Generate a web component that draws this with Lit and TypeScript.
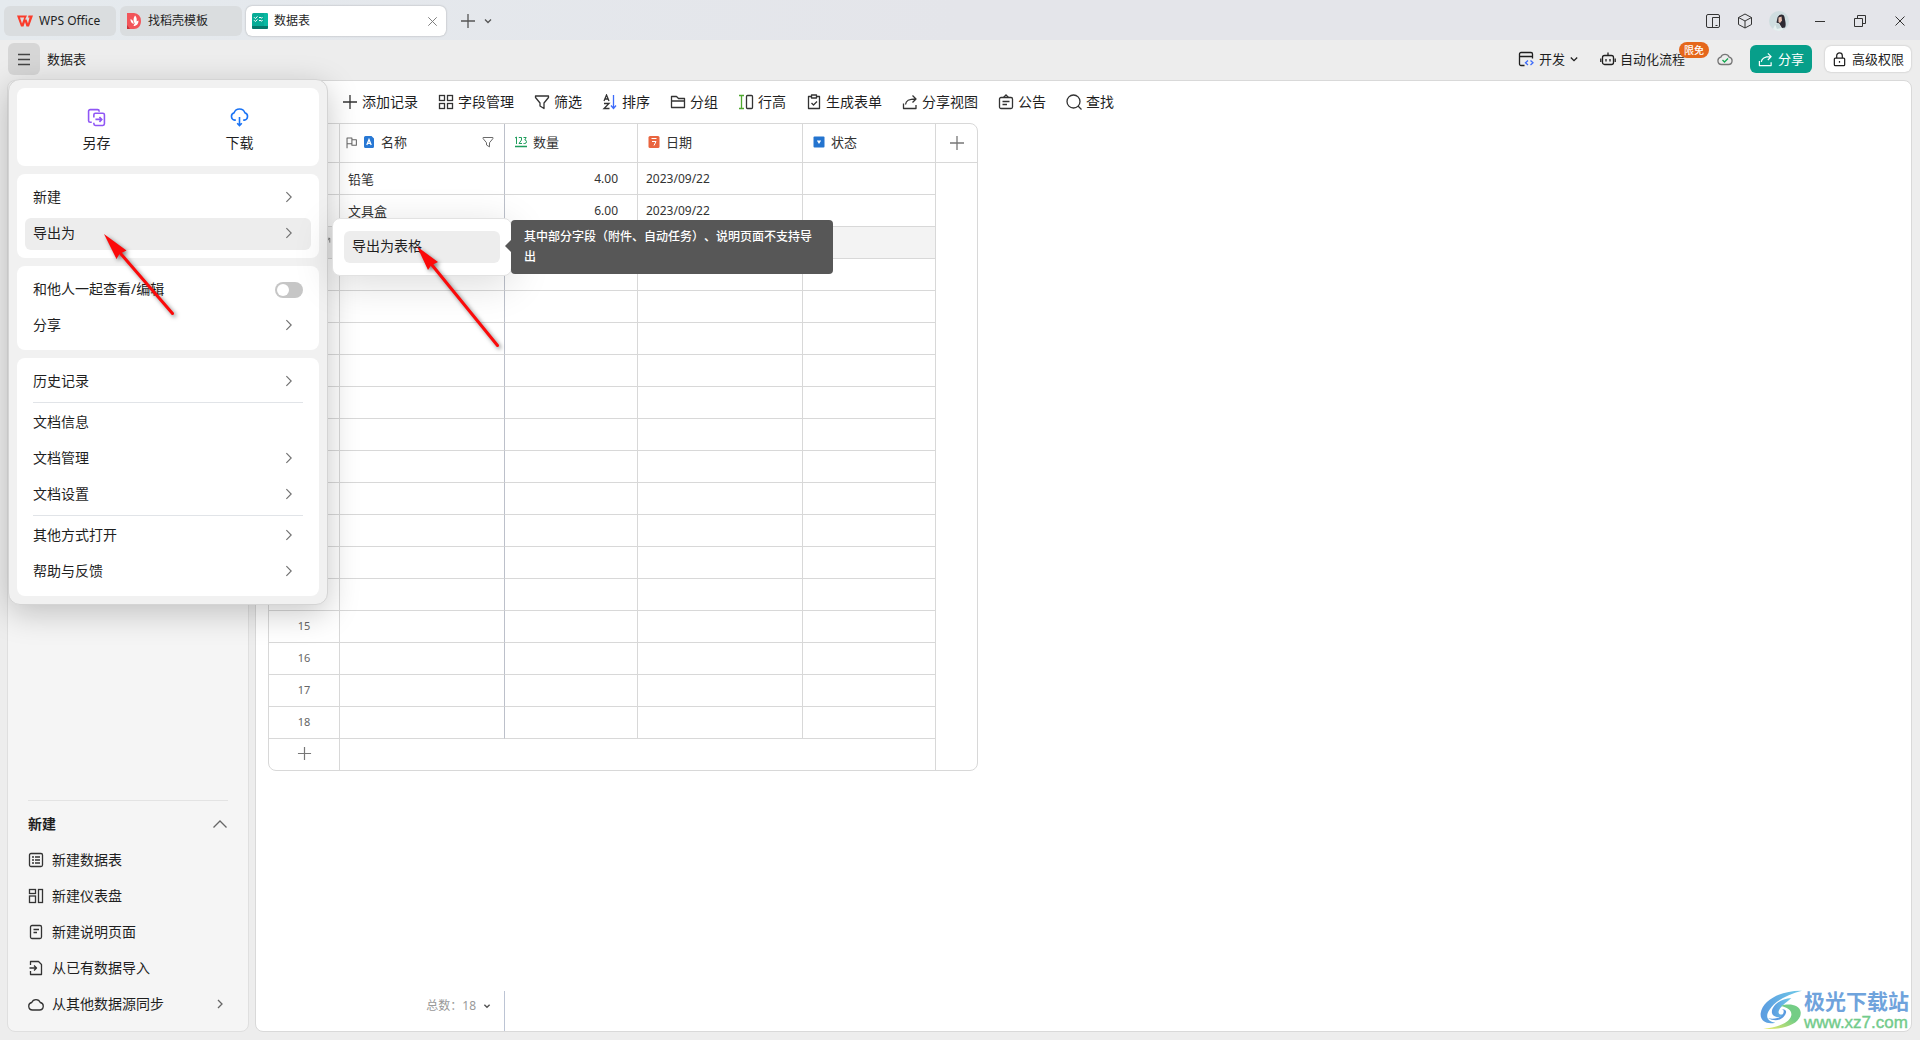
import { LitElement, html, svg, css, nothing } from "lit";
import type { TemplateResult } from "lit";
import { customElement, state } from "lit/decorators.js";
import { classMap } from "lit/directives/class-map.js";

const glyphs: Record<string, TemplateResult> = {
  plus: svg`<path d="M8 1v14M1 8h14"/>`,
  down: svg`<path d="M5 6.500l3 3 3-3" />`,
  caret: svg`<path d="M.8 2.500L4 5.700 7.200 2.500"/>`,
  right: svg`<path d="M5 2.500L10.500 8 5 13.500"/>`,
  rightSmall: svg`<path d="M6 4l4 4-4 4"/>`,
  up: svg`<path d="M1.500 11.500L8 5l6.500 6.500"/>`,
  close: svg`<path d="M3.500 3.500l9 9M12.500 3.500l-9 9"/>`,
  minimize: svg`<path d="M3 8.500h10"/>`,
  restore: svg`<path d="M2.500 5.500h8v8h-8zM5.500 5.500v-3h8v8h-3"/>`,
  panel: svg`<rect x="1.500" y="1.500" width="13" height="13" rx="1.500"/><path d="M7.500 14.500v-10h7M10.500 12.500h2"/>`,
  cube: svg`<path d="M8 1l6.500 3.500v7L8 15l-6.500-3.500v-7zM1.500 4.500L8 8l6.500-3.500M8 8v7"/>`,
  menu: svg`<path d="M1 2.500h12M1 7.500h12M1 12.500h12"/>`,
  fields: svg`<rect x="1.500" y="1.500" width="5" height="5"/><rect x="9.500" y="1.500" width="5" height="5"/><rect x="1.500" y="9.500" width="5" height="5"/><rect x="9.500" y="9.500" width="5" height="5"/>`,
  filter: svg`<path d="M1.500 2h13v1.500L10 9v5.500L6 12V9L1.500 3.500z" stroke-linejoin="round"/>`,
  sort: svg`<path d="M2 7l2.500-6L7 7M3 5h3M2 9.500h5L2 14.500h5.500" /><path d="M11.500 1v13M9 11.500l2.500 3 2.500-3" stroke="#3d6bfa"/>`,
  group: svg`<path d="M1.500 13.500v-11h5l2 2h6v9zM1.500 7h13" stroke-linejoin="round"/>`,
  rowHeight: svg`<path d="M1 1.500h5M3.500 1.500v13M1 14.500h5" stroke="#4ea72e"/><rect x="8.500" y="1.500" width="6" height="13" rx="1"/>`,
  form: svg`<path d="M5 2.500H2.500v12h11v-12H11M5.500 1h5v3h-5zM5.500 9l2 2 3.500-3.500" stroke-linejoin="round"/>`,
  share: svg`<path d="M1.500 9.500v5h12.500v-3.500M3.500 10.500c.5-4 3-5.500 10-5.500M10.500 1.500L14 5l-3.500 3.500" stroke-linejoin="round"/>`,
  notice: svg`<rect x="1.500" y="3.500" width="13" height="11" rx="1.500"/><path d="M5.500 3.500L8 1l2.500 2.500M4.500 7.500h7M4.500 10.500h4.500"/>`,
  search: svg`<circle cx="7.500" cy="7.500" r="6.500"/><path d="M12 12l3.500 3.500"/>`,
  develop: svg`<path d="M6.500 14.500H3a1.500 1.500 0 0 1-1.500-1.500V3A1.500 1.500 0 0 1 3 1.500h10A1.500 1.500 0 0 1 14.500 3v4.500M1.500 5.500h13"/><path d="M10 9.500l-2.500 2.300 2.500 2.300M12.500 9.500l2.500 2.300-2.500 2.300" stroke="#3d6bfa"/>`,
  robot: svg`<rect x="2.500" y="4.500" width="11" height="9" rx="2"/><path d="M8 4.500V1.500M6 8v2.500M10 8v2.500M.8 7.500v3.500M15.200 7.500v3.500"/>`,
  cloudOk: svg`<path d="M4.500 13.500a3.700 3.700 0 0 1-.7-7.300 4.500 4.500 0 0 1 8.400 0 3.700 3.700 0 0 1-.7 7.300z"/><path d="M5.500 9l2 2 3.500-3.500" stroke="#12a84e"/>`,
  lock: svg`<rect x="2.500" y="6.500" width="11" height="8" rx="1"/><path d="M5 6.500V4a3 3 0 0 1 6 0v2.500M8 9.500v2"/>`,
  sheet: svg`<rect x="1.500" y="1.500" width="13" height="13" rx="1.500"/><path d="M4 5h2M7 5h5M4 8h2M7 8h5M4 11h2M7 11h5"/>`,
  board: svg`<rect x="1.500" y="1.500" width="6" height="4"/><rect x="1.500" y="8" width="6" height="6.500"/><rect x="10.500" y="1.500" width="4" height="13"/>`,
  page: svg`<rect x="2.500" y="1.500" width="11" height="13" rx="1.500"/><path d="M5.500 5.500h5.500M5.500 8.500h3.500"/>`,
  importData: svg`<path d="M2.500 5V1.500h8l3 3v10h-11V11M1.500 8h7M6 5.500L8.500 8 6 10.500" stroke-linejoin="round"/>`,
  cloud: svg`<path d="M4.500 14a3.800 3.800 0 0 1-.8-7.500 4.600 4.600 0 0 1 8.600 0A3.800 3.800 0 0 1 11.500 14z"/>`,
  flag: svg`<path d="M2.500 15V2.500h6v7h-6M8.500 4.500h5.500v7H8.500v-2" stroke-linejoin="round"/>`,
  expand: svg`<path d="M7 2h7v7M14 2L4 13M4 8v5h5"/>`,
  saveAs: svg`<path d="M4.500 13.500H3A1.500 1.500 0 0 1 1.500 12V3A1.500 1.500 0 0 1 3 1.500h7A1.500 1.500 0 0 1 11.500 3v.5M6.500 9V6.500A1.500 1.500 0 0 1 8 5h7a1.500 1.500 0 0 1 1.500 1.500v8.500a1.500 1.500 0 0 1-1.500 1.500H8A1.500 1.500 0 0 1 6.500 15v-1M8 10.800h6M11.800 8.500l2.200 2.300-2.200 2.300"/>`,
  download: svg`<path d="M5.500 11.500H4.500a3.600 3.600 0 0 1-.6-7A5.400 5.400 0 0 1 14.100 4.500a3.600 3.600 0 0 1-.6 7h-1M9 8.500v8M6.800 14.500L9 16.700l2.200-2.200"/>`,
};

const icon = (name: string, size = 16, box = 16) => html`
  <svg class="icon" width=${size} height=${size} viewBox="0 0 ${box} ${box}" aria-hidden="true">${glyphs[name]}</svg>`;

const wpsLogo = html`
  <svg width="16" height="12" viewBox="0 0 32 24" aria-hidden="true">
    <path d="M0 1h20l-4 8h-3l1.500-4H6l4 12 3-8h6l3 8 3-12h-3l1-4h9l-8 22h-5l-3-9-3 9H8z" fill="#fa3c2c"/>
  </svg>`;

const docerLogo = html`
  <svg width="16" height="16" viewBox="0 0 16 16" aria-hidden="true">
    <path d="M1 0h7a7.500 7.500 0 0 1 7 8c0 5-3 8-7 8H1z" fill="#f2555a"/>
    <path d="M1 12l3 4H1z" fill="#c93238"/>
    <path d="M9 2.500c2 2 2.500 5 .5 8.500C7 9 7 5.500 9 2.500zM4.500 6c2 .5 3 2.500 3.300 5C5.500 10.500 4.300 8.500 4.500 6zM12.500 7.500c0 3-1.500 5.500-5 5.500 1-3 2.500-4.500 5-5.500z" fill="#fff"/>
  </svg>`;

const tableLogo = html`
  <svg width="16" height="16" viewBox="0 0 16 16" aria-hidden="true">
    <rect width="16" height="16" rx="1.500" fill="#06ab96"/>
    <path d="M12 0h2.500A1.500 1.500 0 0 1 16 1.500V13h-4z" fill="#08b8a1"/>
    <path d="M0 13h16v1.500a1.500 1.500 0 0 1-1.500 1.500h-13A1.500 1.500 0 0 1 0 14.500z" fill="#05786b"/>
    <path d="M2 4.200l1.300 1.300L5.500 3.500M7 4.800q1-1 2 0t1.500-.5M2 7.200l1.300 1.300L5.500 6.500M7 7.800q1-1 2 0t1.500-.5" stroke="#fff" fill="none"/>
  </svg>`;

const avatar = html`
  <svg width="20" height="20" viewBox="0 0 20 20" role="img" aria-label="用户头像">
    <circle cx="10" cy="10" r="10" fill="#cfdde0"/>
    <path d="M4 18l3-6 5 1 2 6a10 10 0 0 1-10-1z" fill="#e6f0f0"/>
    <path d="M8.500 6.500c1.500-3.500 6-4 7-.5.6 4 2 7 .5 10.500l-3 .5-2.500-4-3-1.500z" fill="#2e2a33"/>
    <path d="M9.500 6.500l3-1 .5 4-2 2.500-1.500-1z" fill="#e8bfae"/>
    <path d="M6 13l4-1 2 5-4 1z" fill="#c8d8da"/>
  </svg>`;

const textField = html`
  <svg width="12" height="12" viewBox="0 0 12 12" aria-hidden="true">
    <path d="M1 1.500A1.500 1.500 0 0 1 2.500 0h6L11 2.500v8A1.500 1.500 0 0 1 9.500 12h-7A1.500 1.500 0 0 1 1 10.500z" fill="#2878d4"/>
    <path d="M3.800 9L6 3.500 8.200 9M4.700 7.300h2.600" stroke="#fff" fill="none" stroke-width="1.300"/>
  </svg>`;
const numberField = html`
  <svg width="12" height="12" viewBox="0 0 12 12" aria-hidden="true">
    <path d="M0 2l1.500-1v7M3.800 1.500h2.700v2.500L4 7.500h3M8.500 1.500h2.700L9.800 4q1.700 0 1.700 1.700T9.800 7.500H8.500" stroke="#1f9d5c" fill="none"/>
    <path d="M0 10.500h12" stroke="#1f9d5c" stroke-width="1.500"/>
  </svg>`;
const dateField = html`
  <svg width="12" height="12" viewBox="0 0 12 12" aria-hidden="true">
    <rect x=".5" width="11" height="12" rx="1.500" fill="#e9653f"/>
    <path d="M3.500 2.500h5M4 5.500h4L6 9.500" stroke="#fff" fill="none"/>
  </svg>`;
const selectField = html`
  <svg width="12" height="12" viewBox="0 0 12 12" aria-hidden="true">
    <rect x=".5" y=".5" width="11" height="11" rx="1" fill="#2474cf"/>
    <path d="M3.800 4.500h4.400L6 8z" fill="#fff"/>
  </svg>`;

interface MenuEntry { label: string; kind?: "toggle" | "plain"; active?: boolean; ruleAfter?: boolean }

const menuCards: MenuEntry[][] = [
  [{ label: "新建" }, { label: "导出为", active: true }],
  [{ label: "和他人一起查看/编辑", kind: "toggle" }, { label: "分享" }],
  [
    { label: "历史记录", ruleAfter: true },
    { label: "文档信息", kind: "plain" },
    { label: "文档管理" },
    { label: "文档设置", ruleAfter: true },
    { label: "其他方式打开" },
    { label: "帮助与反馈" },
  ],
];

const tools: [string, string][] = [
  ["plus", "添加记录"], ["fields", "字段管理"], ["filter", "筛选"], ["sort", "排序"], ["group", "分组"],
  ["rowHeight", "行高"], ["form", "生成表单"], ["share", "分享视图"], ["notice", "公告"], ["search", "查找"],
];

const createItems: [string, string][] = [
  ["sheet", "新建数据表"], ["board", "新建仪表盘"], ["page", "新建说明页面"],
  ["importData", "从已有数据导入"], ["cloud", "从其他数据源同步"],
];

const records = [
  { name: "铅笔", count: "4.00", date: "2023/09/22" },
  { name: "文具盒", count: "6.00", date: "2023/09/22" },
];
const ROWS = 18;

const base = css`
  * { box-sizing: border-box; }
  button {
    display: flex; align-items: center; margin: 0; padding: 0; border: 0; background: none;
    color: inherit; font: inherit; text-align: left; white-space: nowrap; cursor: pointer;
  }
  svg { display: block; flex: none; }
  .icon { fill: none; stroke: currentColor; stroke-width: 1.300; }
`;

@customElement("file-menu")
export class FileMenu extends LitElement {
  @state() private shared = false;

  static styles = [base, css`
    :host { display: block; font-size: 14px; line-height: 20px; color: #1f1f1f; }
    .menu {
      display: flex; flex-direction: column; gap: 8px; width: 320px; padding: 8px;
      background: #f1f1f1; border: 1px solid #d4d4d4; border-radius: 12px;
      box-shadow: 0 8px 32px rgba(0, 0, 0, 0.22);
    }
    .card { display: flex; flex-direction: column; gap: 4px; padding: 8px; background: #fff; border-radius: 8px; }
    .quick { display: grid; grid-template-columns: 1fr 1fr; gap: 0; }
    .quick button { flex-direction: column; justify-content: center; gap: 6px; height: 62px; padding-top: 6px; }
    .save .icon { color: #8f56f5; }
    .load .icon { color: #1a73f5; }
    .quick .icon { stroke-width: 1.500; }
    .entry {
      display: flex; align-items: center; justify-content: space-between;
      width: 100%; height: 32px; padding: 0 8px 2px; border-radius: 6px;
    }
    .active { background: #ededed; }
    .slot { display: grid; place-items: center; width: 28px; color: #707070; }
    .rule { height: 1px; margin: 0 8px; background: #e1e4e8; }
    .toggle {
      appearance: none; position: relative; width: 28px; height: 16px; margin: 2px 0 0;
      background: #c6c6c6; border-radius: 8px;
    }
    .toggle::before {
      content: ""; position: absolute; top: 2px; left: 2px; width: 12px; height: 12px;
      background: #fff; border-radius: 50%;
    }
    .toggle:checked { background: #0a9f8a; }
    .toggle:checked::before { left: 14px; }
    .submenu {
      position: absolute; left: 324px; top: 139px; width: 180px; padding: 12px 11px;
      background: #fff; border: 1px solid #e2e2e2; border-radius: 8px;
      box-shadow: 0 8px 40px rgba(0, 0, 0, 0.14);
    }
    .tip {
      position: absolute; left: 503px; top: 141px; width: 322px; padding: 7px 13px;
      background: #575757; color: #fff; border-radius: 4px; font-size: 12px; font-weight: 500; line-height: 20px;
      text-spacing-trim: space-all;
    }
    .tip::before {
      content: ""; position: absolute; left: -6px; top: 20px;
      border: 6px solid transparent; border-left-width: 0; border-right-color: #575757;
    }
  `];

  private entry(e: MenuEntry) {
    const rule = e.ruleAfter ? html`<div class="rule"></div>` : nothing;
    if (e.kind === "toggle") {
      return html`<label class="entry">${e.label}
        <input class="toggle" type="checkbox" role="switch" .checked=${this.shared}
          @change=${(ev: Event) => (this.shared = (ev.target as HTMLInputElement).checked)} /></label>${rule}`;
    }
    return html`<button class=${classMap({ entry: true, active: !!e.active })}>${e.label}
      ${e.kind === "plain" ? nothing : html`<span class="slot">${icon("right", 14)}</span>`}</button>${rule}`;
  }

  render() {
    return html`
      <div class="menu">
        <div class="card quick">
          <button class="save">${icon("saveAs", 19, 18)}<span>另存</span></button>
          <button class="load">${icon("download", 19, 18)}<span>下载</span></button>
        </div>
        ${menuCards.map((card) => html`<div class="card">${card.map((e) => this.entry(e))}</div>`)}
      </div>
      <div class="submenu"><button class="entry active">导出为表格</button></div>
      <div class="tip" role="tooltip">其中部分字段（附件、自动任务）、说明页面不支持导出</div>`;
  }
}

@customElement("record-grid")
export class RecordGrid extends LitElement {
  static styles = [base, css`
    :host { display: block; font-size: 13px; color: #333; }
    .frame { width: 710px; border: 1px solid #d8d8d8; border-radius: 8px; overflow: hidden; }
    table { width: 100%; table-layout: fixed; border-collapse: separate; border-spacing: 0; }
    .c0 { width: 71px; } .c1, .c3 { width: 165px; } .c2, .c4 { width: 133px; } .c5 { width: 41px; }
    th, td { padding: 0 9px 0 8px; border: 0 solid #d8d8d8; border-width: 0 1px 1px 0; font-weight: 400; white-space: nowrap; line-height: 16px; }
    th { height: 39px; padding: 0 10px 2px; text-align: left; }
    td { height: 32px; }
    .frozen { border-right-color: #bcc0ca; }
    .head { display: flex; align-items: center; gap: 6px; }
    .lead { gap: 5px; margin-left: -5px; color: #666; }
    .lead .name { flex: 1; margin-left: 1px; color: #333; }
    .no { padding: 0 0 2px; color: #666; font-size: 11px; text-align: center; }
    .num { padding-right: 19px; text-align: right; font-size: 12px; }
    .date { font-size: 12px; }
    .side { border-right: 0; }
    .side.body { border-bottom: 0; }
    .plus { margin: auto; color: #777; }
    th.side { padding: 0; }
    .hover td { background: #f3f3f3; }
    .open { margin-left: auto; padding-right: 8px; color: #777; }
    .last td { height: 31px; border-bottom: 0; }
  `];

  render() {
    return html`
      <div class="frame"><table>
        <colgroup><col class="c0" /><col class="c1" /><col class="c2" /><col class="c3" /><col class="c4" /><col class="c5" /></colgroup>
        <thead><tr>
          <th></th>
          <th class="frozen"><div class="head lead">${icon("flag", 13)}${textField}<span class="name">名称</span>${icon("filter", 12)}</div></th>
          <th><div class="head">${numberField}数量</div></th>
          <th><div class="head">${dateField}日期</div></th>
          <th><div class="head">${selectField}状态</div></th>
          <th class="side"><button class="plus" aria-label="添加字段">${icon("plus")}</button></th>
        </tr></thead>
        <tbody>
          ${Array.from({ length: ROWS }, (_, i) => html`
            <tr class=${classMap({ hover: i === 2 })}>
              <td class="no">${i === 2 ? html`<button class="open" aria-label="展开记录">${icon("expand", 10)}</button>` : i + 1}</td>
              <td class="frozen">${records[i]?.name ?? nothing}</td>
              <td class="num">${records[i]?.count ?? nothing}</td>
              <td class="date">${records[i]?.date ?? nothing}</td>
              <td></td>
              ${i === 0 ? html`<td class="side body" rowspan=${ROWS + 1}></td>` : nothing}
            </tr>`)}
          <tr class="last">
            <td class="no"><button class="plus" aria-label="添加记录">${icon("plus", 15)}</button></td>
            <td colspan="4"></td>
          </tr>
        </tbody>
      </table></div>`;
  }
}

@customElement("app-root")
export class AppRoot extends LitElement {
  @state() private createOpen = true;

  static styles = [base, css`
    :host {
      display: flex; flex-direction: column; position: relative; min-height: 100vh; overflow: hidden;
      box-sizing: border-box; background: #ededed; color: #1f1f1f;
      font: 13px/20px "Noto Sans", "Noto Sans CJK SC", sans-serif;
    }
    .titlebar {
      display: flex; align-items: center; height: 40px; padding: 2px 4px 0;
      background: linear-gradient(90deg, #e5eaee, #e4e5ea 50%); font-size: 12px;
    }
    .tabs { display: flex; gap: 4px; }
    .tab { height: 30px; gap: 6px; padding: 0 7px; background: #dadddf; border-radius: 6px; }
    .home { width: 112px; padding: 0 13px; }
    .store { width: 122px; padding-left: 6px; }
    .doc {
      display: flex; align-items: center; width: 200px; padding: 0 6px; background: #fff;
      box-shadow: 0 0 2px rgba(0, 0, 0, 0.3);
    }
    .doc .title { flex: 1; }
    .doc button { color: #777; }
    .doc .icon { stroke-width: 1; }
    .add { gap: 4px; margin-left: 14px; color: #555; }
    .window { display: flex; align-items: center; gap: 16px; margin-left: auto; color: #333; }
    .window .icon { stroke-width: 1; }
    .system { display: flex; gap: 24px; margin: 0 8px 0 7px; }
    .header { display: flex; align-items: center; height: 40px; padding: 0 9px 2px 8px; }
    .burger { justify-content: center; width: 32px; height: 32px; margin-right: 7px; background: #d6d6d6; border-radius: 6px; color: #444; }
    .burger .icon { stroke-width: 1.500; }
    .actions { display: flex; align-items: center; margin-left: auto; }
    .actions button { gap: 4px; }
    .actions .develop { gap: 5px; margin-right: 22px; }
    .flow { position: relative; margin-right: 32px; }
    .flow .badge {
      position: absolute; left: 79px; top: -7px; padding: 0 5px; background: #e5671b; color: #fff;
      border-radius: 8px; font-size: 10px; line-height: 16px; font-weight: 500;
    }
    .synced { margin-right: 17px; color: #777; }
    .actions .share { height: 28px; margin-right: 13px; padding: 0 8px; gap: 5px; background: #079f8a; border-radius: 6px; color: #fff; }
    .actions .access { height: 26px; padding: 0 7px; gap: 5px; background: #fff; border-radius: 6px; box-shadow: 0 0 2px rgba(0, 0, 0, 0.25); }
    .workspace { display: grid; grid-template-columns: 242px minmax(0, 1fr); gap: 6px; flex: 1; padding: 0 8px 8px 7px; }
    .sidebar {
      display: flex; flex-direction: column; justify-content: flex-end; padding: 0 20px 9px;
      background: #f5f5f5; border: 1px solid #dfdfdf; border-radius: 8px; font-size: 14px;
    }
    .section { display: flex; flex-direction: column; padding-top: 5px; border-top: 1px solid #e3e3e3; }
    .section button { gap: 8px; width: 100%; height: 36px; }
    .section .heading { justify-content: space-between; font-weight: 700; }
    .item .icon { color: #333; }
    .heading .icon, .item .icon:last-child { color: #666; }
    .item .label { flex: 1; }
    .canvas {
      display: flex; flex-direction: column; background: #fff; border: 1px solid #d9d9d9; border-radius: 8px;
    }
    .toolbar { display: flex; gap: 20px; height: 42px; padding-left: 86px; font-size: 14px; }
    .toolbar button { gap: 4px; }
    .toolbar .icon { color: #333; }
    .grid { padding-left: 12px; }
    .footer {
      display: flex; align-items: center; justify-content: flex-end; width: 249px; height: 40px; margin-top: auto;
      padding: 0 10px 10px 0; border-right: 1px solid #bcc4d4; color: #999; font-size: 12px; gap: 4px;
    }
    .footer .icon { color: #555; stroke-width: 1.600; }
    file-menu { position: absolute; left: 8px; top: 79px; }
    .pointers { position: absolute; left: 0; top: 0; pointer-events: none; filter: drop-shadow(2px 2px 2px rgba(0, 0, 0, 0.5)); }
    .brand { position: absolute; right: 11px; bottom: 8px; display: flex; align-items: center; gap: 2px; }
    .brand .site { color: #6fa3dc; font-size: 21px; line-height: 26px; font-weight: 700; }
    .brand .url { color: #72cb8b; font: 400 17px/18px "Liberation Sans", sans-serif; -webkit-text-stroke: 0.400px #72cb8b; }
  `];

  render() {
    return html`
      <header class="titlebar">
        <nav class="tabs">
          <button class="tab home">${wpsLogo}WPS Office</button>
          <button class="tab store">${docerLogo}找稻壳模板</button>
          <div class="tab doc">${tableLogo}<span class="title">数据表</span><button aria-label="关闭标签">${icon("close", 15)}</button></div>
        </nav>
        <button class="add" aria-label="新建标签">${icon("plus")}${icon("down")}</button>
        <div class="window">
          <button aria-label="侧栏">${icon("panel")}</button>
          <button aria-label="应用">${icon("cube")}</button>
          <button aria-label="账户">${avatar}</button>
          <div class="system">
            <button aria-label="最小化">${icon("minimize")}</button>
            <button aria-label="还原">${icon("restore")}</button>
            <button aria-label="关闭">${icon("close")}</button>
          </div>
        </div>
      </header>

      <div class="header">
        <button class="burger" aria-label="菜单">${icon("menu", 14, 14)}</button>
        <span>数据表</span>
        <div class="actions">
          <button class="develop">${icon("develop")}开发${icon("caret", 8, 8)}</button>
          <button class="flow">${icon("robot")}自动化流程<span class="badge">限免</span></button>
          <button class="synced" aria-label="已同步">${icon("cloudOk")}</button>
          <button class="share">${icon("share", 15)}分享</button>
          <button class="access">${icon("lock", 15)}高级权限</button>
        </div>
      </div>

      <div class="workspace">
        <aside class="sidebar">
          <div class="section">
            <button class="heading" @click=${() => (this.createOpen = !this.createOpen)}>新建${icon("up")}</button>
            ${this.createOpen
              ? createItems.map(([glyph, label]) => html`
                  <button class="item">${icon(glyph)}<span class="label">${label}</span>${glyph === "cloud" ? icon("rightSmall") : nothing}</button>`)
              : nothing}
          </div>
        </aside>
        <main class="canvas">
          <div class="toolbar">${tools.map(([glyph, label]) => html`<button>${icon(glyph)}${label}</button>`)}</div>
          <record-grid class="grid"></record-grid>
          <button class="footer">总数：18 ${icon("down", 14)}</button>
        </main>
      </div>

      <file-menu></file-menu>

      <svg class="pointers" width="520" height="360" viewBox="0 0 520 360" aria-hidden="true">
        <g fill="#fb0a0a" stroke="#fb0a0a">
          <path d="M121 254L172.500 313.500M432 265L497.500 345.500" stroke-width="3" stroke-linecap="round"/>
          <path d="M104 234l22.500 16.500-7 3.500-3 5zM417 246.500l21 15.500-7 3.500-3 4.500z" stroke="none"/>
        </g>
      </svg>

      <div class="brand">
        <svg width="42" height="40" viewBox="0 0 126 120" aria-hidden="true">
          <defs>
            <linearGradient id="sky" x1="0" y1="0" x2="1" y2="0"><stop offset="0" stop-color="#5b9be0"/><stop offset="1" stop-color="#6fcbe8"/></linearGradient>
            <linearGradient id="leaf" x1="0" y1="1" x2="1" y2="0"><stop offset="0" stop-color="#f0ec6a"/><stop offset=".6" stop-color="#74cd86"/></linearGradient>
          </defs>
          <path d="M126 2C70 0 8 28 2 70c-2 22 16 34 44 28C20 94 16 78 28 60 44 34 80 14 126 2z" fill="url(#sky)"/>
          <path d="M94 24C58 26 32 50 36 70c4 14 28 16 34 2-8 4-16 0-14-8 4-14 20-24 38-40z" fill="url(#sky)"/>
          <path d="M24 84c20 12 46 8 54-16 2-8-6-12-14-10 14 0 6 22-12 26-10 3-20 3-28 0z" fill="#5b9be0"/>
          <path d="M62 48c22-8 56-6 60 18 3 34-50 56-112 50 40-2 80-18 84-40 2-16-12-24-32-28z" fill="url(#leaf)"/>
        </svg>
        <div><div class="site">极光下载站</div><div class="url">www.xz7.com</div></div>
      </div>`;
  }
}
